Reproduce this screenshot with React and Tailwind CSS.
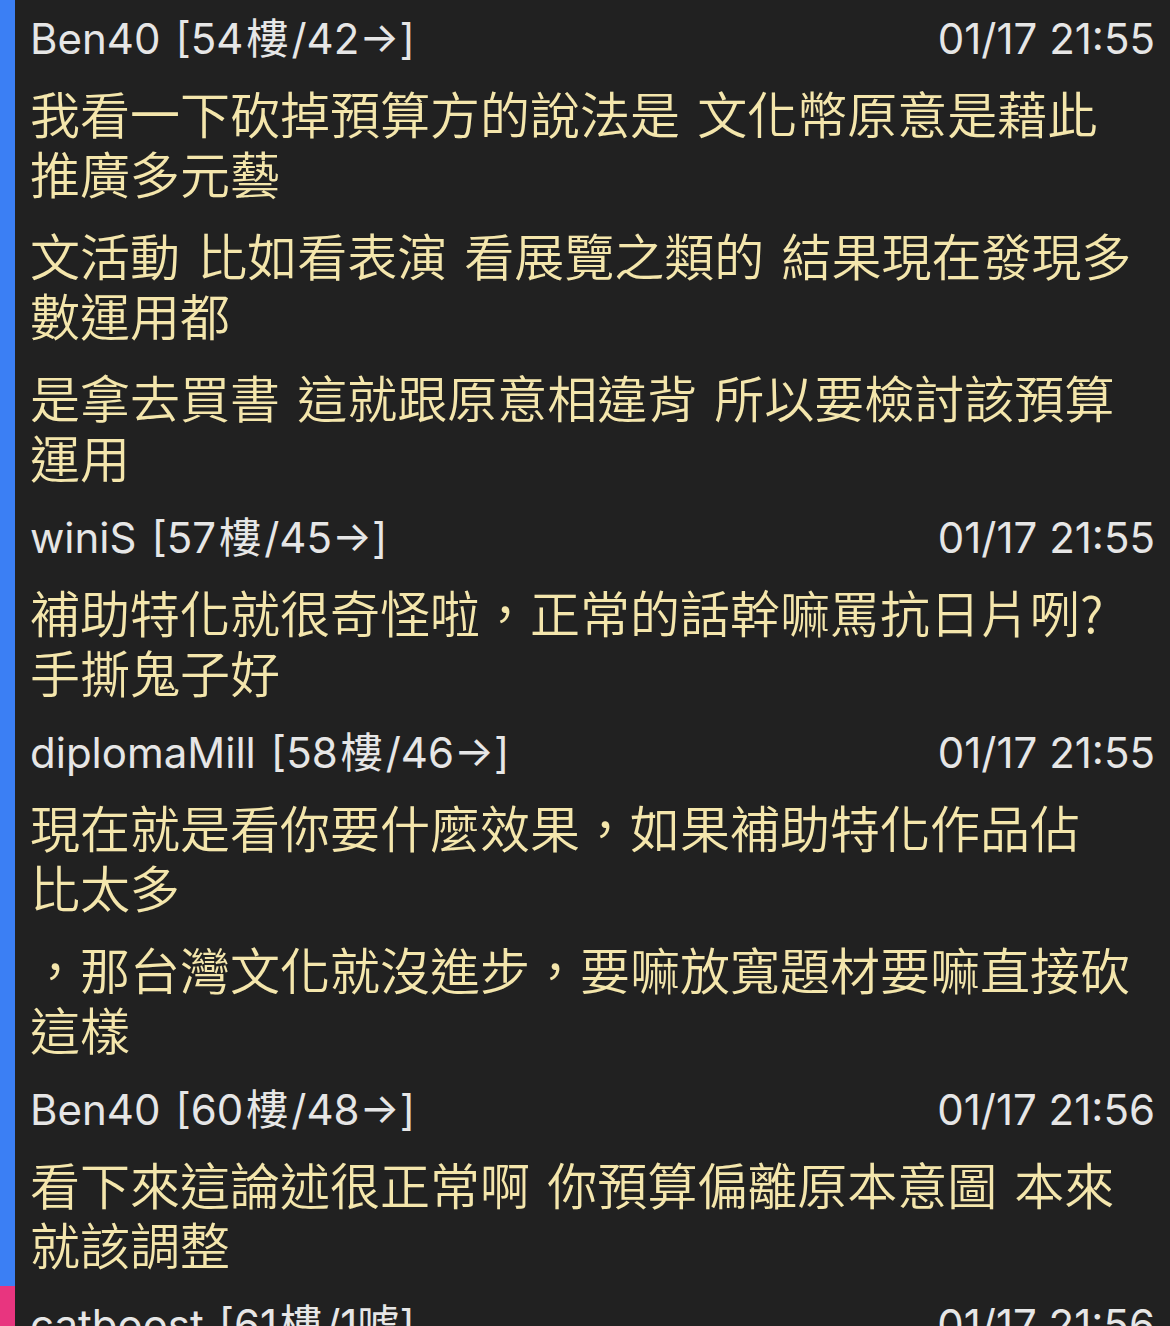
import React from 'react';

const posts = [
  {
    user: 'Ben40',
    floor: ['54', '42→'],
    time: '01/17 21:55',
    bar: 'bg-[#3b7ff4]',
    paras: [
      '我看一下砍掉預算方的說法是 文化幣原意是藉此\n推廣多元藝',
      '文活動 比如看表演 看展覽之類的 結果現在發現多\n數運用都',
      '是拿去買書 這就跟原意相違背 所以要檢討該預算\n運用',
    ],
  },
  {
    user: 'winiS',
    floor: ['57', '45→'],
    time: '01/17 21:55',
    bar: 'bg-[#3b7ff4]',
    paras: ['補助特化就很奇怪啦，正常的話幹嘛罵抗日片咧?\n手撕鬼子好'],
  },
  {
    user: 'diplomaMill',
    floor: ['58', '46→'],
    time: '01/17 21:55',
    bar: 'bg-[#3b7ff4]',
    paras: [
      '現在就是看你要什麼效果，如果補助特化作品佔\n比太多',
      '，那台灣文化就沒進步，要嘛放寬題材要嘛直接砍\n這樣',
    ],
  },
  {
    user: 'Ben40',
    floor: ['60', '48→'],
    time: '01/17 21:56',
    bar: 'bg-[#3b7ff4]',
    paras: ['看下來這論述很正常啊 你預算偏離原本意圖 本來\n就該調整'],
  },
  {
    user: 'catboost',
    floor: ['61', '1噓'],
    time: '01/17 21:56',
    bar: 'bg-[#e8357f]',
    paras: ['其實就是預算被拿去亂用'],
  },
];

const Post = ({ post }) => (
  <div className="flex">
    <div className={`w-[15px] shrink-0 ${post.bar}`} />
    <div className="flex-1 pl-[15px] pr-[15px] pt-[11px] pb-[13px]">
      <div className="flex h-14 items-center justify-between text-[42px] leading-[56px] text-[#e6e6e6] font-['Inter','Noto_Sans_CJK_TC',sans-serif]">
        <span className="whitespace-nowrap">
          {post.user}
          <span className="ml-[15px]">
            [{post.floor[0]}
            <span className="mx-[3px]">樓</span>/{post.floor[1]}]
          </span>
        </span>
        <span className="whitespace-nowrap">{post.time}</span>
      </div>
      <div className="mt-[15px] flex flex-col gap-[22px]">
        {post.paras.map((p, i) => (
          <p
            key={i}
            className="whitespace-pre-line text-[50px] leading-[60px] font-[350] [word-spacing:6px] text-[#f4e6ac] font-['Noto_Sans_CJK_TC',sans-serif]"
          >
            {p}
          </p>
        ))}
      </div>
    </div>
  </div>
);

export default function App() {
  return (
    <div className="h-[1326px] w-[1170px] overflow-hidden bg-[#212121]">
      {posts.map((post, i) => (
        <Post key={i} post={post} />
      ))}
    </div>
  );
}
